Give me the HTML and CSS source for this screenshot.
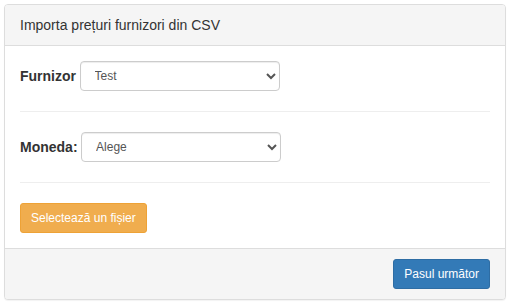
FILE: index.html
```html
<!DOCTYPE html>
<html lang="ro">
<head>
    <meta charset="UTF-8">
    <meta name="viewport" content="width=device-width, initial-scale=1.0">
    <title>Importa prețuri furnizori din CSV</title>
    <link rel="stylesheet" href="styles.css">
</head>
<body>
    <div class="panel">
        <div class="panel-heading">
            <h3 class="panel-title">Importa prețuri furnizori din CSV</h3>
        </div>
        <div class="panel-body">
            <div class="form-row">
                <label for="furnizor">Furnizor</label>
                <select id="furnizor" class="form-select">
                    <option>Test</option>
                </select>
            </div>
            <hr>
            <div class="form-row">
                <label for="moneda">Moneda:</label>
                <select id="moneda" class="form-select">
                    <option>Alege</option>
                </select>
            </div>
            <hr>
            <button class="btn btn-warning">Selectează un fișier</button>
        </div>
        <div class="panel-footer">
            <button class="btn btn-primary">Pasul următor</button>
        </div>
    </div>
</body>
</html>
```

FILE: styles.css
```css
body {
    font-family: "Liberation Sans", Arial, sans-serif;
    font-size: 14px;
    line-height: 20px;
    color: #333;
    margin: 0;
    padding: 4px;
    background-color: #fff;
}
.panel {
    width: 500px;
    border: 1px solid #ddd;
    border-radius: 4px;
    box-shadow: 0 1px 1px rgba(0, 0, 0, 0.05);
    background-color: #fff;
}
.panel-heading {
    background-color: #f5f5f5;
    border-bottom: 1px solid #ddd;
    border-radius: 3px 3px 0 0;
    padding: 10px 15px;
}
.panel-title {
    margin: 0;
    font-size: 14px;
    font-weight: normal;
    line-height: 20px;
    color: #333;
}
.panel-body {
    padding: 15px;
}
.form-row {
    display: flex;
    align-items: center;
    gap: 4px;
}
.form-row label {
    font-weight: bold;
}
.form-row label + .form-select {
    margin-left: -0.5px;
}
.form-select {
    width: 200px;
    height: 30px;
    padding: 5px 10px;
    font-family: inherit;
    font-size: 12px;
    color: #555;
    background-color: #fff;
    border: 1px solid #ccc;
    border-radius: 4px;
    box-shadow: inset 0 1px 1px rgba(0, 0, 0, 0.075);
}
hr {
    margin: 20px 0;
    border: 0;
    border-top: 1px solid #eee;
}
.btn {
    font-family: inherit;
    font-size: 12px;
    line-height: 18px;
    padding: 5px 10px;
    border: 1px solid transparent;
    border-radius: 3px;
    color: #fff;
    cursor: pointer;
}
.btn-warning {
    background-color: #f0ad4e;
    border-color: #eea236;
}
.btn-primary {
    background-color: #337ab7;
    border-color: #2e6da4;
}
.panel-footer {
    display: flex;
    justify-content: flex-end;
    padding: 10px 15px;
    background-color: #f5f5f5;
    border-top: 1px solid #ddd;
    border-radius: 0 0 3px 3px;
}
```
